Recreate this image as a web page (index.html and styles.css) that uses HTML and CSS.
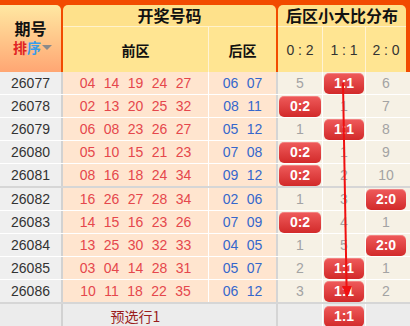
FILE: index.html
```html
<!DOCTYPE html>
<html lang="zh">
<head>
<meta charset="utf-8">
<title>后区小大比分布</title>
<link rel="stylesheet" href="styles.css">
</head>
<body>
<div class="page">
  <div class="head">
    <div class="h-issue">
      <div class="h-issue-t">期号</div>
      <div class="sort"><span class="s1">排</span><span class="s2">序</span><span class="tri"></span></div>
    </div>
    <div class="h-draw">
      <div class="h-title">开奖号码</div>
      <div class="h-sub">
        <div class="h-front">前区</div>
        <div class="h-back">后区</div>
      </div>
    </div>
    <div class="h-dist">
      <div class="h-title">后区小大比分布</div>
      <div class="h-sub">
        <div class="hd hd1">0 : 2</div>
        <div class="hd hd2">1 : 1</div>
        <div class="hd hd3">2 : 0</div>
      </div>
    </div>
  </div>

  <div class="body">
    <div class="row">
      <div class="c-issue">26077</div>
      <div class="c-front"><span>04</span><span>14</span><span>19</span><span>24</span><span>27</span></div>
      <div class="c-back"><span>06</span><span>07</span></div>
      <div class="d d1">5</div><div class="d d2"><span class="pill">1:1</span></div><div class="d d3">6</div>
    </div>
    <div class="row">
      <div class="c-issue">26078</div>
      <div class="c-front"><span>02</span><span>13</span><span>20</span><span>25</span><span>32</span></div>
      <div class="c-back"><span>08</span><span>11</span></div>
      <div class="d d1"><span class="pill">0:2</span></div><div class="d d2">1</div><div class="d d3">7</div>
    </div>
    <div class="row">
      <div class="c-issue">26079</div>
      <div class="c-front"><span>06</span><span>08</span><span>23</span><span>26</span><span>27</span></div>
      <div class="c-back"><span>05</span><span>12</span></div>
      <div class="d d1">1</div><div class="d d2"><span class="pill">1:1</span></div><div class="d d3">8</div>
    </div>
    <div class="row">
      <div class="c-issue">26080</div>
      <div class="c-front"><span>05</span><span>10</span><span>15</span><span>21</span><span>23</span></div>
      <div class="c-back"><span>07</span><span>08</span></div>
      <div class="d d1"><span class="pill">0:2</span></div><div class="d d2">1</div><div class="d d3">9</div>
    </div>
    <div class="row group-end">
      <div class="c-issue">26081</div>
      <div class="c-front"><span>08</span><span>16</span><span>18</span><span>24</span><span>34</span></div>
      <div class="c-back"><span>09</span><span>12</span></div>
      <div class="d d1"><span class="pill">0:2</span></div><div class="d d2">2</div><div class="d d3">10</div>
    </div>
    <div class="row">
      <div class="c-issue">26082</div>
      <div class="c-front"><span>16</span><span>26</span><span>27</span><span>28</span><span>34</span></div>
      <div class="c-back"><span>02</span><span>06</span></div>
      <div class="d d1">1</div><div class="d d2">3</div><div class="d d3"><span class="pill">2:0</span></div>
    </div>
    <div class="row">
      <div class="c-issue">26083</div>
      <div class="c-front"><span>14</span><span>15</span><span>16</span><span>23</span><span>26</span></div>
      <div class="c-back"><span>07</span><span>09</span></div>
      <div class="d d1"><span class="pill">0:2</span></div><div class="d d2">4</div><div class="d d3">1</div>
    </div>
    <div class="row">
      <div class="c-issue">26084</div>
      <div class="c-front"><span>13</span><span>25</span><span>30</span><span>32</span><span>33</span></div>
      <div class="c-back"><span>04</span><span>05</span></div>
      <div class="d d1">1</div><div class="d d2">5</div><div class="d d3"><span class="pill">2:0</span></div>
    </div>
    <div class="row">
      <div class="c-issue">26085</div>
      <div class="c-front"><span>03</span><span>04</span><span>14</span><span>28</span><span>31</span></div>
      <div class="c-back"><span>05</span><span>07</span></div>
      <div class="d d1">2</div><div class="d d2"><span class="pill">1:1</span></div><div class="d d3">1</div>
    </div>
    <div class="row group-end">
      <div class="c-issue">26086</div>
      <div class="c-front"><span>10</span><span>11</span><span>18</span><span>22</span><span>35</span></div>
      <div class="c-back"><span>06</span><span>12</span></div>
      <div class="d d1">3</div><div class="d d2"><span class="pill">1:1</span></div><div class="d d3">2</div>
    </div>
    <div class="row foot">
      <div class="c-issue"></div>
      <div class="c-front f-label">预选行1</div>
      <div class="c-back"></div>
      <div class="d d1"></div><div class="d d2"><span class="pill">1:1</span></div><div class="d d3"></div>
    </div>
  </div>

  <svg class="trend" width="410" height="326" viewBox="0 0 410 326">
    <line x1="343" y1="83" x2="346.6" y2="288" stroke="#f01010" stroke-width="2"/>
    <polygon points="342,286 352,286 347,298" fill="#f01010"/>
  </svg>
</div>
</body>
</html>
```

FILE: styles.css
```css
* { box-sizing: border-box; }
html, body { margin: 0; padding: 0; background: #fff; }
body {
  font-family: "Liberation Sans", Arial, "Noto Sans CJK SC", sans-serif;
  font-size: 14px;
  color: #333;
}
.page {
  position: relative;
  width: 410px;
  height: 326px;
  overflow: hidden;
}

/* header */
.head {
  display: flex;
  gap: 2px;
  height: 72px;
  padding: 5px 4px 0 0;
  background: #f24b00;
}
.h-issue {
  width: 61px;
  border-radius: 0 5px 0 0;
  background: linear-gradient(#ffe8a2, #ffa673);
  display: flex;
  flex-direction: column;
  align-items: center;
  padding-top: 14px;
  font-family: "Noto Sans CJK SC", sans-serif;
  font-weight: bold;
}
.h-issue-t {
  font-size: 16px;
  line-height: 19px;
  height: 19px;
  color: #111;
}
.sort {
  display: flex;
  align-items: center;
  font-size: 14px;
  line-height: 17px;
  height: 17px;
  margin-top: 1px;
  padding-left: 4px;
}
.s1 { color: #e02424; }
.s2 { color: #3a9de8; }
.tri {
  width: 0;
  height: 0;
  margin-left: 1px;
  border-left: 5px solid transparent;
  border-right: 5px solid transparent;
  border-top: 5px solid #8a8a8a;
}
.h-draw {
  width: 213px;
  display: flex;
  flex-direction: column;
}
.h-dist {
  flex: 1;
  display: flex;
  flex-direction: column;
}
.h-title {
  height: 22px;
  background: #fee18b;
  border-radius: 5px 5px 0 0;
  border-bottom: 1px solid #fff2cc;
  font-family: "Noto Sans CJK SC", sans-serif;
  font-weight: bold;
  font-size: 16px;
  line-height: 21px;
  color: #111;
  text-align: center;
}
.h-sub {
  flex: 1;
  display: flex;
  background: #ffe592;
}
.h-front, .h-back {
  display: flex;
  align-items: center;
  justify-content: center;
  font-family: "Noto Sans CJK SC", sans-serif;
  font-weight: bold;
  font-size: 14px;
  color: #111;
}
.h-front { width: 146px; border-right: 1px solid #fff3d4; }
.h-back { flex: 1; }
.hd {
  display: flex;
  align-items: center;
  justify-content: center;
  font-size: 14px;
  color: #333;
}
.hd1 { width: 45px; border-right: 1px solid #fff3d4; }
.hd2 { width: 43px; border-right: 1px solid #fff3d4; }
.hd3 { flex: 1; }

/* body */
.row {
  display: flex;
  height: 23px;
  border-bottom: 1px solid #fff;
}
.row.group-end { border-bottom: 2px solid #d6d6d6; height: 24px; }
.c-issue {
  width: 63px;
  background: #efefef;
  border-right: 2px solid #d2d2d2;
  display: flex;
  align-items: center;
  justify-content: center;
  color: #333;
}
.c-front, .c-back {
  display: flex;
  align-items: center;
  justify-content: center;
  gap: 8.4px;
  background: #ffe5cf;
}
.c-front { width: 146px; border-right: 1px solid #fff; color: #e5474c; }
.c-back { width: 69px; border-right: 2px solid #d5d5d5; color: #3567cc; }
.d {
  display: flex;
  align-items: center;
  justify-content: center;
  background: #f6f1e5;
  color: #a3a3a3;
}
.d1 { width: 45px; border-right: 1px solid #fff; }
.d2 { width: 43px; border-right: 1px solid #fff; }
.d3 { flex: 1; padding-right: 4px; }

.pill {
  width: 40px;
  height: 21px;
  border-radius: 5px;
  background: linear-gradient(#ef5b5b, #d22a2a);
  box-shadow: inset 0 1px 0 rgba(255,255,255,0.25);
  color: #fff;
  font-weight: bold;
  font-size: 14px;
  display: flex;
  align-items: center;
  justify-content: center;
}
.d1 .pill { width: 42px; }

.row.foot { height: 24px; border-bottom: 0; }
.foot .c-issue { background: #ececec; }
.foot .c-front, .foot .c-back, .foot .d { background: #ececec; }
.foot .c-front { border-right-color: #ececec; }
.f-label {
  color: #9b1c1c;
  font-family: "Noto Sans CJK SC", sans-serif;
}

.trend {
  position: absolute;
  left: 0;
  top: 0;
  pointer-events: none;
}
```
